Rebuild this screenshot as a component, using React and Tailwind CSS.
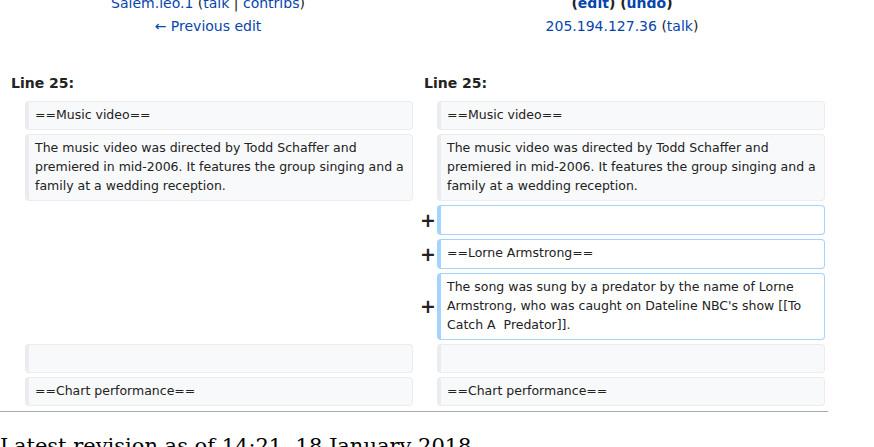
import React from 'react';

const Context = ({ children }) => (
    <div className="w-[388px] box-border border border-l-4 border-[#eaecf0] bg-[#f8f9fa] rounded-[4px] pl-[6px] pr-[3px] pt-[3px] pb-[5px] text-[12.5px] leading-[19px] text-[#222]">
        {children}
    </div>
);

const Added = ({ children }) => (
    <div className="w-[388px] min-h-[30px] box-border border border-l-4 border-[#a3d3ff] bg-white rounded-[4px] pl-[6px] pr-[3px] pt-[3px] pb-[5px] text-[12.5px] leading-[19px] text-[#222]">
        {children}
    </div>
);

const Marker = () => (
    <div className="w-[24px] flex items-center justify-end pr-[1px] text-[19px] font-bold text-[#222] leading-none">+</div>
);

export default function App() {
    return (
        <div className="w-[874px] h-[447px] overflow-hidden bg-white font-['DejaVu_Sans',sans-serif] text-[#222]">
            <div className="w-[828px] -mt-[8px]">
                {/* revision headers */}
                <div className="flex text-[14px] leading-[23px]">
                    <div className="w-[416px] text-center">
                        <div>
                            <span className="text-[#0645ad]">Salem.leo.1</span> (<span className="text-[#0645ad]">talk</span> | <span className="text-[#0645ad]">contribs</span>)
                        </div>
                        <div className="text-[#0645ad]">← Previous edit</div>
                    </div>
                    <div className="w-[412px] text-center">
                        <div className="font-bold">
                            (<span className="text-[#0645ad]">edit</span>) (<span className="text-[#0645ad]">undo</span>)
                        </div>
                        <div>
                            <span className="text-[#0645ad]">205.194.127.36</span> (<span className="text-[#0645ad]">talk</span>)
                        </div>
                    </div>
                </div>

                {/* line numbers */}
                <div className="flex mt-[35px] text-[14px] font-bold leading-[20px]">
                    <div className="w-[413px] pl-[11px]">Line 25:</div>
                    <div className="pl-[11px]">Line 25:</div>
                </div>

                {/* diff rows */}
                <div className="mt-[8px] flex flex-col gap-[4px]">
                    <div className="flex">
                        <div className="w-[25px]" />
                        <Context>==Music video==</Context>
                        <div className="w-[24px]" />
                        <Context>==Music video==</Context>
                    </div>
                    <div className="flex">
                        <div className="w-[25px]" />
                        <Context>The music video was directed by Todd Schaffer and premiered in mid-2006. It features the group singing and a family at a wedding reception.</Context>
                        <div className="w-[24px]" />
                        <Context>The music video was directed by Todd Schaffer and premiered in mid-2006. It features the group singing and a family at a wedding reception.</Context>
                    </div>
                    <div className="flex">
                        <div className="w-[413px]" />
                        <Marker />
                        <Added>{'\u00a0'}</Added>
                    </div>
                    <div className="flex">
                        <div className="w-[413px]" />
                        <Marker />
                        <Added>==Lorne Armstrong==</Added>
                    </div>
                    <div className="flex">
                        <div className="w-[413px]" />
                        <Marker />
                        <Added>The song was sung by a predator by the name of Lorne Armstrong, who was caught on Dateline NBC's show [[To Catch A{'\u00a0'} Predator]].</Added>
                    </div>
                    <div className="flex">
                        <div className="w-[25px]" />
                        <Context>{'\u00a0'}</Context>
                        <div className="w-[24px]" />
                        <Context>{'\u00a0'}</Context>
                    </div>
                    <div className="flex">
                        <div className="w-[25px]" />
                        <Context>==Chart performance==</Context>
                        <div className="w-[24px]" />
                        <Context>==Chart performance==</Context>
                    </div>
                </div>

                <div className="mt-[5px] border-t border-[#a2a9b1]" />
                <h2 className="mt-[20px] font-['DejaVu_Serif',serif] text-[21px] leading-[28px] text-black whitespace-nowrap">
                    Latest revision as of 14:21, 18 January 2018
                </h2>
            </div>
        </div>
    );
}
